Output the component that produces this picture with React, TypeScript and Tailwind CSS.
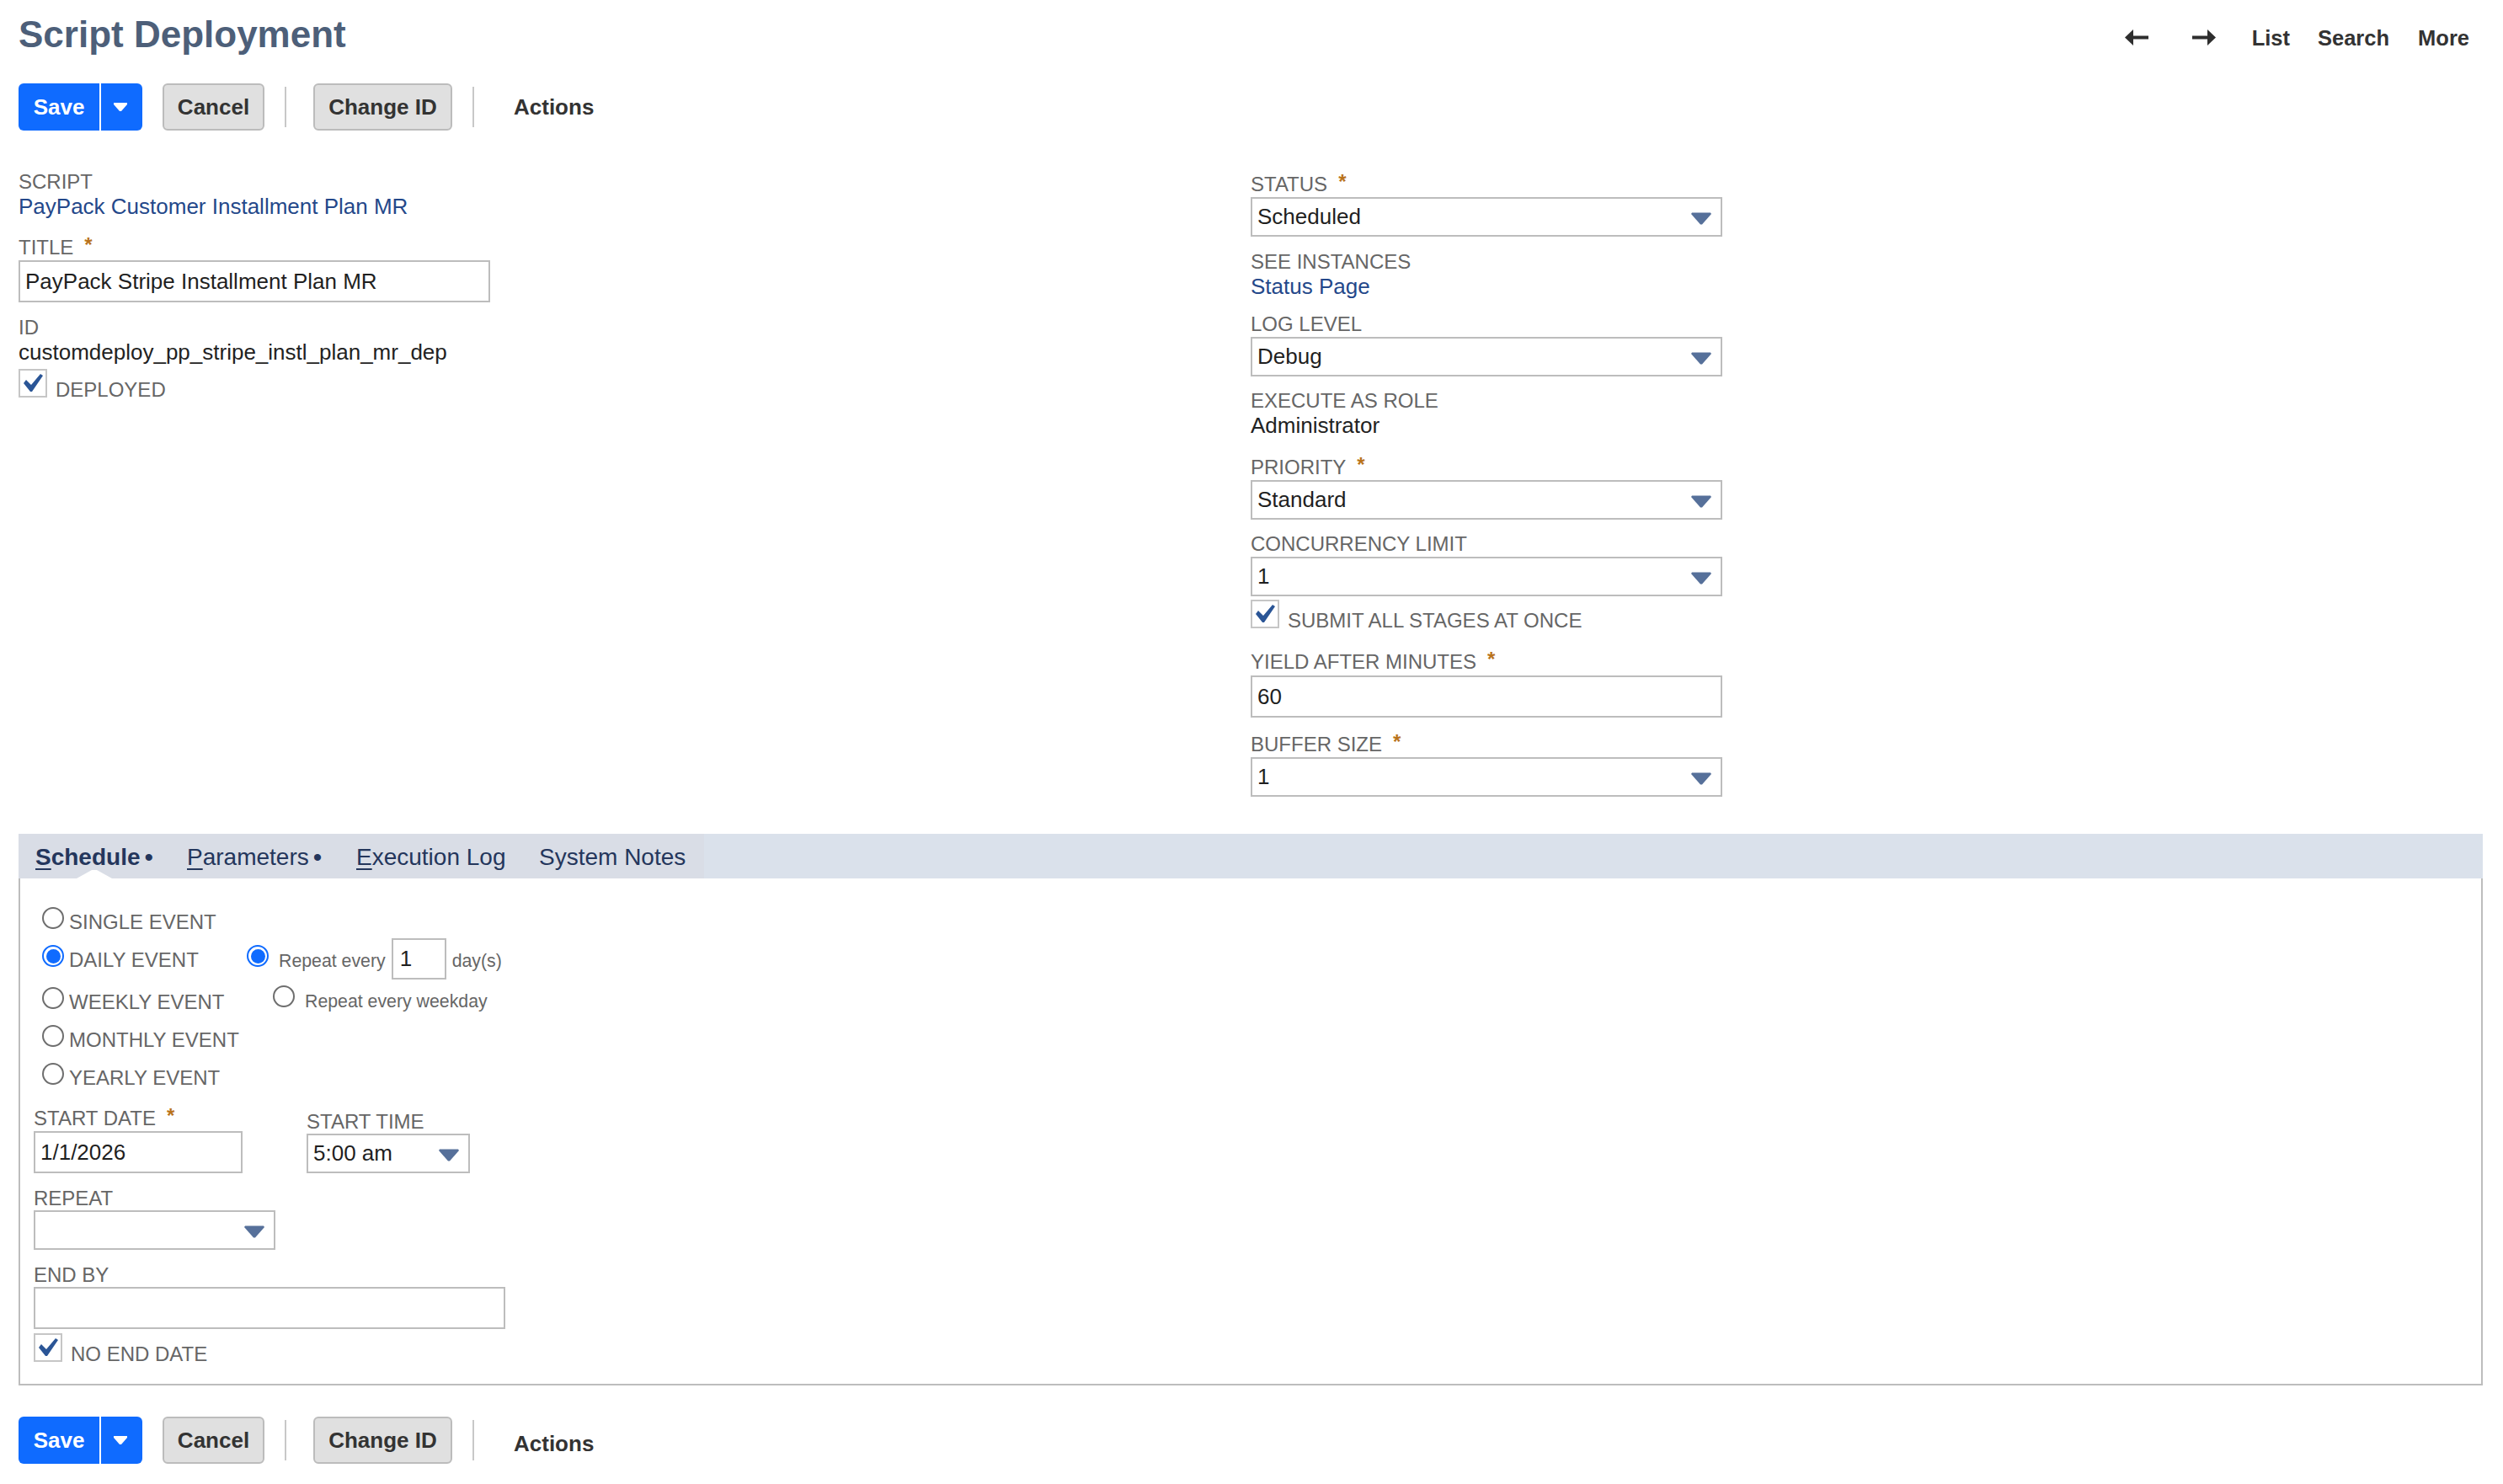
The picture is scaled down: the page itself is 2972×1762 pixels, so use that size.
import type { ReactNode } from 'react';

function Star() {
  return <span className="ml-[13px] inline-block h-[16px] align-[3px] text-[24px] leading-[16px] font-bold text-[#b9731c]">*</span>;
}

function Label({ children, required, className = '' }: { children: ReactNode; required?: boolean; className?: string }) {
  return (
    <div className={`h-[28px] text-[24px] leading-[28px] whitespace-nowrap text-[#666666] ${className}`}>
      {children}
      {required && <Star />}
    </div>
  );
}

function Value({ children, link }: { children: ReactNode; link?: boolean }) {
  return (
    <div className={`h-[30px] text-[26px] leading-[30px] whitespace-nowrap ${link ? 'text-[#24488a]' : 'text-[#222222]'}`}>
      {children}
    </div>
  );
}

function TextInput({ value, className = '' }: { value?: string; className?: string }) {
  return (
    <div className={`flex h-[50px] items-center border-2 border-[#bdbdbd] bg-white pl-[6px] text-[26px] text-[#1f1f1f] ${className}`}>
      {value}
    </div>
  );
}

function Select({ value, className = '' }: { value?: string; className?: string }) {
  return (
    <div className={`flex h-[47px] items-center justify-between border-2 border-[#bdbdbd] bg-white pr-[11px] pl-[6px] text-[26px] text-[#1f1f1f] ${className}`}>
      <span>{value}</span>
      <svg width="24" height="15" viewBox="0 0 24 15" className="mt-[3px]">
        <path d="M1 0.5 H23 L24 2 L13 14.5 H11 L0 2 Z" fill="#56709a" />
      </svg>
    </div>
  );
}

function Checkbox({ label, className = '' }: { label: string; className?: string }) {
  return (
    <div className={`flex items-start ${className}`}>
      <div className="h-[34px] w-[34px] border-2 border-[#c6c6c6] bg-white">
        <svg width="30" height="30" viewBox="0 0 30 30">
          <path d="M4 15 L7 11 L13 17 L24 4 L27 6 L14 25 H12 Z" fill="#2a5596" />
        </svg>
      </div>
      <Label className="mt-[11px] ml-[10px]">{label}</Label>
    </div>
  );
}

function Radio({ checked, className = '' }: { checked?: boolean; className?: string }) {
  return checked ? (
    <div className={`flex h-[26px] w-[26px] shrink-0 items-center justify-center rounded-full border-2 border-[#0f6bff] bg-white ${className}`}>
      <div className="h-[17px] w-[17px] rounded-full bg-[#0f6bff]" />
    </div>
  ) : (
    <div className={`h-[26px] w-[26px] shrink-0 rounded-full border-2 border-[#6e6e6e] bg-white ${className}`} />
  );
}

function GrayButton({ children, className = '' }: { children: ReactNode; className?: string }) {
  return (
    <div className={`flex h-[56px] items-center justify-center rounded-[6px] border-2 border-[#bcbcbc] bg-[#e0e0e0] text-[26px] font-bold text-[#333333] ${className}`}>
      {children}
    </div>
  );
}

function Toolbar({ actionsOffset, className = '' }: { actionsOffset?: boolean; className?: string }) {
  return (
    <div className={`flex h-[56px] items-center ${className}`}>
      <div className="flex h-[56px] w-[147px] items-center rounded-[6px] bg-[#0f6bff] text-white">
        <div className="w-[96px] text-center text-[26px] font-bold">Save</div>
        <div className="h-full w-[2px] bg-white" />
        <div className="flex flex-1 justify-center pr-[3px]">
          <svg width="16" height="10" viewBox="0 0 16 10">
            <path d="M0 0 H16 V2 L9 10 H7 L0 2 Z" fill="#ffffff" />
          </svg>
        </div>
      </div>
      <GrayButton className="ml-[24px] w-[121px]">Cancel</GrayButton>
      <div className="ml-[24px] h-[48px] w-[2px] bg-[#c8c8c8]" />
      <GrayButton className="ml-[32px] w-[165px]">Change ID</GrayButton>
      <div className="ml-[24px] h-[48px] w-[2px] bg-[#c8c8c8]" />
      <div className={`ml-[47px] text-[26px] font-bold text-[#333333] ${actionsOffset ? 'mt-[8px]' : ''}`}>Actions</div>
    </div>
  );
}

function Tab({ letter, rest, bold, dot, className = '' }: { letter: string; rest: string; bold?: boolean; dot?: boolean; className?: string }) {
  return (
    <div className={`text-[28px] leading-[32px] whitespace-nowrap text-[#24365c] ${bold ? 'font-bold' : ''} ${className}`}>
      <span className="underline underline-offset-[4px]">{letter}</span>
      {rest}
      {dot && <span className="ml-[5px] align-[-1px] text-[30px] leading-[20px] font-normal">•</span>}
    </div>
  );
}

export default function App() {
  return (
    <div className="min-h-[1762px] bg-white font-['Liberation_Sans',Arial,sans-serif] pr-[24px] pl-[22px]">
      {/* Header */}
      <div className="flex items-start justify-between pt-[15px]">
        <h1 className="text-[44px] leading-[52px] font-bold whitespace-nowrap text-[#4d5f79]">Script Deployment</h1>
        <div className="flex items-start pt-[15px] pr-[16px] text-[25.5px] leading-[30px] font-bold text-[#333333]">
          <svg width="28" height="19" viewBox="0 0 28 19" className="mt-[5px]">
            <path d="M28 7.5 H10 V0 L0 9.5 L10 19 V11.5 H28 Z" fill="#2e2e2e" />
          </svg>
          <svg width="28" height="19" viewBox="0 0 28 19" className="mt-[5px] ml-[52px]">
            <path d="M0 7.5 H18 V0 L28 9.5 L18 19 V11.5 H0 Z" fill="#2e2e2e" />
          </svg>
          <span className="ml-[43px]">List</span>
          <span className="ml-[33px]">Search</span>
          <span className="ml-[34px]">More</span>
        </div>
      </div>

      <Toolbar className="mt-[32px]" />

      {/* Main fields */}
      <div className="mt-[47px] flex h-[788px] items-start">
        <div className="w-[1463px]">
          <Label>SCRIPT</Label>
          <Value link>PayPack Customer Installment Plan MR</Value>
          <Label required className="mt-[20px]">TITLE</Label>
          <TextInput className="mt-[1px] w-[560px]" value="PayPack Stripe Installment Plan MR" />
          <Label className="mt-[16px]">ID</Label>
          <Value>customdeploy_pp_stripe_instl_plan_mr_dep</Value>
          <Checkbox label="DEPLOYED" className="mt-[5px]" />
        </div>
        <div className="w-[560px] pt-[3px]">
          <Label required>STATUS</Label>
          <Select className="mt-[1px]" value="Scheduled" />
          <Label className="mt-[16px]">SEE INSTANCES</Label>
          <Value link>Status Page</Value>
          <Label className="mt-[16px]">LOG LEVEL</Label>
          <Select className="mt-[1px]" value="Debug" />
          <Label className="mt-[15px]">EXECUTE AS ROLE</Label>
          <Value>Administrator</Value>
          <Label required className="mt-[21px]">PRIORITY</Label>
          <Select className="mt-[1px]" value="Standard" />
          <Label className="mt-[15px]">CONCURRENCY LIMIT</Label>
          <Select className="mt-[1px]" value="1" />
          <Checkbox label="SUBMIT ALL STAGES AT ONCE" className="mt-[4px]" />
          <Label required className="mt-[21px]">YIELD AFTER MINUTES</Label>
          <TextInput className="mt-[2px]" value="60" />
          <Label required className="mt-[18px]">BUFFER SIZE</Label>
          <Select className="mt-[1px]" value="1" />
        </div>
      </div>

      {/* Tabs */}
      <div className="relative flex h-[53px] bg-[#dae1eb]">
        <div className="flex w-[814px] items-start bg-[#d9dde6] pt-[12px] pl-[20px]">
          <Tab letter="S" rest="chedule" bold dot className="w-[180px]" />
          <Tab letter="P" rest="arameters" dot className="w-[201px]" />
          <Tab letter="E" rest="xecution Log" className="w-[217px]" />
          <div className="text-[28px] leading-[32px] whitespace-nowrap text-[#24365c]">System Notes</div>
        </div>
        <svg width="42" height="10" viewBox="0 0 42 10" className="absolute bottom-0 left-[69px]">
          <path d="M0 10 L18 0 H24 L42 10 Z" fill="#ffffff" />
        </svg>
      </div>

      <div className="h-[602px] border-x-2 border-b-2 border-[#bdbdbd] pt-[34px] pl-[16px]">
        <div className="flex h-[26px] items-start pl-[10px]">
          <Radio />
          <Label className="mt-[4px] ml-[6px]">SINGLE EVENT</Label>
        </div>
        <div className="mt-[19px] flex h-[26px] items-start pl-[10px]">
          <Radio checked />
          <Label className="mt-[4px] ml-[6px] w-[211px]">DAILY EVENT</Label>
          <Radio checked />
          <span className="mt-[7px] ml-[12px] text-[21.3px] leading-[24px] whitespace-nowrap text-[#666666]">Repeat every</span>
          <div className="-mt-[8px] ml-[7px] flex h-[49px] w-[65px] shrink-0 items-center border-2 border-[#bdbdbd] pl-[8px] text-[26px] text-[#1f1f1f]">1</div>
          <span className="mt-[7px] ml-[7px] text-[21.3px] leading-[24px] whitespace-nowrap text-[#666666]">day(s)</span>
        </div>
        <div className="mt-[24px] flex h-[26px] items-start pl-[10px]">
          <Radio />
          <Label className="mt-[4px] ml-[6px] w-[242px]">WEEKLY EVENT</Label>
          <Radio className="-mt-[2px]" />
          <span className="mt-[5px] ml-[12px] text-[21.3px] leading-[24px] whitespace-nowrap text-[#666666]">Repeat every weekday</span>
        </div>
        <div className="mt-[19px] flex h-[26px] items-start pl-[10px]">
          <Radio />
          <Label className="mt-[4px] ml-[6px]">MONTHLY EVENT</Label>
        </div>
        <div className="mt-[19px] flex h-[26px] items-start pl-[10px]">
          <Radio />
          <Label className="mt-[4px] ml-[6px]">YEARLY EVENT</Label>
        </div>

        <div className="mt-[26px] flex items-start">
          <div className="w-[324px]">
            <Label required>START DATE</Label>
            <TextInput className="mt-[1px] w-[248px]" value="1/1/2026" />
          </div>
          <div className="w-[194px] pt-[4px]">
            <Label>START TIME</Label>
            <Select value="5:00 am" />
          </div>
        </div>
        <Label className="mt-[16px]">REPEAT</Label>
        <Select className="w-[287px]" />
        <Label className="mt-[16px]">END BY</Label>
        <TextInput className="w-[560px]" />
        <Checkbox label="NO END DATE" className="mt-[5px]" />
      </div>

      <Toolbar actionsOffset className="mt-[37px]" />
    </div>
  );
}
